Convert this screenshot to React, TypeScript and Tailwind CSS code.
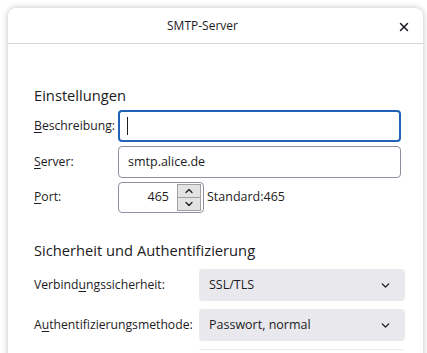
import { ChevronDown, ChevronUp, X } from "lucide-react";

const font = { fontFamily: '"Open Sans", "Noto Sans", sans-serif' };

function Label(props: { text: string; key1: number; width: string }) {
  const a = props.text.slice(0, props.key1);
  const b = props.text.slice(props.key1, props.key1 + 1);
  const c = props.text.slice(props.key1 + 1);
  return (
    <label className={`${props.width} shrink-0 whitespace-nowrap text-[12.2px] text-[#1c1b22]`}>
      {a}
      <span className="underline underline-offset-2">{b}</span>
      {c}
    </label>
  );
}

function Select(props: { value: string }) {
  return (
    <div className="flex h-[32px] w-[206px] items-center justify-between rounded-[4px] bg-[#e9e9ed] pl-[10px] pr-[13px] text-[12.5px] text-[#1c1b22]">
      <span>{props.value}</span>
      <ChevronDown size={13} strokeWidth={2.5} />
    </div>
  );
}

export default function App() {
  return (
    <div style={font} className="h-[353px] w-[427px] overflow-hidden bg-white pl-[8px] pr-[4px] pt-[8px]">
      <div className="h-[400px] rounded-t-[8px] bg-white shadow-[0_0_6px_rgba(0,0,0,0.25)]">
        <div className="relative flex h-[36px] items-center justify-center border-b border-[#d6d6d6]">
          <span className="mr-[26px] text-[12px] text-[#1c1b22]">SMTP-Server</span>
          <X className="absolute right-[12px] top-[12px] text-[#1c1b22]" size={14} strokeWidth={2.5} />
        </div>
        <div className="pl-[26px] pt-[41px]">
          <h2 className="text-[14.7px] leading-[20px] text-[#1c1b22]">Einstellungen</h2>
          <div className="mt-[5px] flex flex-col gap-[4px]">
            <div className="flex items-center">
              <Label text="Beschreibung:" key1={0} width="w-[84px]" />
              <div className="flex h-[32px] w-[283px] items-center rounded-[4px] border-2 border-[#1f62b8] px-[7px]">
                <div className="h-[18px] w-px bg-[#1c1b22]" />
              </div>
            </div>
            <div className="flex items-center">
              <Label text="Server:" key1={0} width="w-[84px]" />
              <div className="flex h-[32px] w-[283px] items-center rounded-[4px] border border-[#8f8f9d] px-[9px] text-[12.5px] text-[#1c1b22]">
                smtp.alice.de
              </div>
            </div>
            <div className="flex items-center">
              <Label text="Port:" key1={0} width="w-[84px]" />
              <div className="flex h-[31px] w-[86px] items-center rounded-[4px] border border-[#8f8f9d] pr-[2px] text-[12.5px] text-[#1c1b22]">
                <span className="flex-1 pr-[8px] text-right">465</span>
                <div className="flex h-[27px] w-[24px] flex-col border border-[#a0a0a0]">
                  <div className="flex flex-1 items-center justify-center border-b border-[#a0a0a0] bg-[#e3e3e3]">
                    <ChevronUp size={12} strokeWidth={2.5} />
                  </div>
                  <div className="flex flex-1 items-center justify-center bg-[#e3e3e3]">
                    <ChevronDown size={12} strokeWidth={2.5} />
                  </div>
                </div>
              </div>
              <span className="ml-[3px] text-[12.5px] text-[#1c1b22]">Standard:465</span>
            </div>
          </div>
          <h2 className="mt-[27px] text-[14.7px] leading-[20px] text-[#1c1b22]">Sicherheit und Authentifizierung</h2>
          <div className="mt-[9px] flex flex-col gap-[8px]">
            <div className="flex items-center">
              <Label text="Verbindungssicherheit:" key1={7} width="w-[165px]" />
              <Select value="SSL/TLS" />
            </div>
            <div className="flex items-center">
              <Label text="Authentifizierungsmethode:" key1={1} width="w-[165px]" />
              <Select value="Passwort, normal" />
            </div>
            <div className="flex items-center">
              <div className="w-[165px]" />
              <div className="h-[32px] w-[206px] rounded-[4px] border-t border-[#e9e9ed]" />
            </div>
          </div>
        </div>
      </div>
    </div>
  );
}
